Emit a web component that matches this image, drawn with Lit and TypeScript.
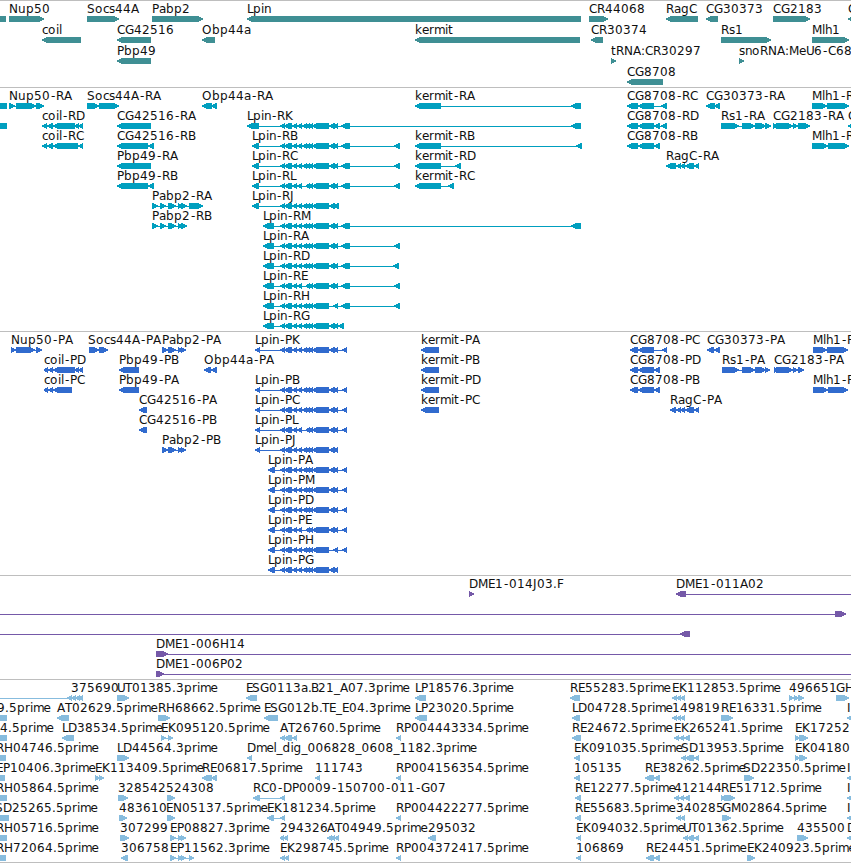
import { LitElement, html, svg, css } from 'lit';
import { customElement, property } from 'lit/decorators.js';

// row, label, strand, spans ("a-b,c-d"), optional label x
type Feature = [number, string, string, string, number?];

interface Track {
  name: string;
  height: number;
  pitch: number;
  features: Feature[];
}

const ADVANCES: Record<string, number> = {
  ' ': 4, '.': 4, ':': 4, '-': 6, '_': 6,
  A: 8, B: 7, C: 8, D: 9, E: 7, F: 7, G: 9, H: 9, I: 3, J: 4, K: 8, L: 6,
  M: 10, N: 9, O: 10, P: 7, R: 8, S: 8, T: 7, U: 8,
  a: 7, b: 8, c: 6, d: 8, e: 7, g: 8, h: 7, i: 3, k: 7, l: 3, m: 11, n: 7,
  o: 8, p: 8, r: 5, s: 6, t: 5, u: 8,
};

const KERNING: Record<string, number> = { ES: -1, '.B': -1, '.T': -1, me: -0.6 };

const BODY = '280-285,284-292,292-297,297-302,302-307,306-310,309-313,312-329,329-335,333-338';
const BODY_E = '280-285,284-292,292-297,297-302,306-310,309-313,312-329,329-335,333-338';
const BODY_H = '280-285,284-292,292-297,297-302,302-307,306-310,309-313,312-329,333-338';

const genes: Feature[] = [
  [0, '', '|', '-5-6'],
  [0, 'Nup50', '>', '9-44'],
  [0, 'Socs44A', '>', '87-119'],
  [0, 'Pabp2', '>', '152-203'],
  [0, 'Lpin', '<', '247-581'],
  [0, 'CR44068', '>', '589-608'],
  [0, 'RagC', '<', '666-698'],
  [0, 'CG30373', '<', '706-718'],
  [0, 'CG2183', '>', '773-810'],
  [0, 'C', '<', '848-870'],
  [1, 'coil', '<', '42-81'],
  [1, 'CG42516', '<', '117-151'],
  [1, 'Obp44a', '<', '202-215'],
  [1, 'kermit', '<', '415-580'],
  [1, 'CR30374', '<', '591-603'],
  [1, 'Rs1', '>', '721-771'],
  [1, 'Mlh1', '>', '812-849'],
  [2, 'Pbp49', '<', '117-151'],
  [2, 'tRNA:CR30297', '>', '611-616'],
  [2, 'snoRNA:MeU6-C68', '>', '739-744'],
  [3, 'CG8708', '<', '627-663'],
];

const transcripts: Feature[] = [
  [0, '', '|', '-5-7'],
  [0, 'Nup50-RA', '>', '9-15,16-36,36-44'],
  [0, 'Socs44A-RA', '>', '87-99,99-119'],
  [0, 'Obp44a-RA', '<', '202-212,211-217'],
  [0, 'kermit-RA', '<', '415-441,571-581'],
  [0, 'CG8708-RC', '<', '627-638,638-654,661-667'],
  [0, 'CG30373-RA', '<', '706-715,714-720'],
  [0, 'Mlh1-RA', '>', '812-827,827-849'],
  [1, '', '|', '-5-7'],
  [1, 'coil-RD', '<', '42-47,47-53,53-75,74-79,78-83'],
  [1, 'CG42516-RA', '<', '117-151'],
  [1, 'Lpin-RK', '<', `247-259,${BODY},341-350,571-581`],
  [1, 'CG8708-RD', '<', '627-638,638-654,654-660,661-667'],
  [1, 'Rs1-RA', '>', '721-739,742-755,755-766,765-771'],
  [1, 'CG2183-RA', '>', '773-777,776-793,793-798,798-810'],
  [1, 'C', '<', '848-870'],
  [2, 'coil-RC', '<', '42-47,47-53,53-78,78-83'],
  [2, 'CG42516-RB', '<', '117-148,148-154'],
  [2, 'Lpin-RB', '<', `252-259,${BODY},341-350,394-400`],
  [2, 'kermit-RB', '<', '415-441,576-582'],
  [2, 'CG8708-RB', '<', '627-638,638-654,654-660'],
  [2, 'Mlh1-RB', '>', '812-828,828-849'],
  [3, 'Pbp49-RA', '<', '117-151'],
  [3, 'Lpin-RC', '<', `252-259,${BODY},341-350,394-400`],
  [3, 'kermit-RD', '<', '415-441,455-461'],
  [3, 'RagC-RA', '<', '666-676,676-681,680-685,685-694,694-699'],
  [4, 'Pbp49-RB', '<', '117-148,148-154'],
  [4, 'Lpin-RL', '<', `252-259,${BODY_E},341-350,394-400`],
  [4, 'kermit-RC', '<', '415-441,448-454'],
  [5, 'Pabp2-RA', '>', '152-158,160-166,168-176,178-182,181-187,189-203'],
  [5, 'Lpin-RJ', '<', `252-259,${BODY},334-339`],
  [6, 'Pabp2-RB', '>', '152-158,160-166,168-176,178-182,181-187'],
  [6, 'Lpin-RM', '<', `263-274,${BODY},341-350,571-581`],
  [7, 'Lpin-RA', '<', `263-274,${BODY},341-350,394-400`],
  [8, 'Lpin-RD', '<', `263-274,${BODY},341-350,393-399`],
  [9, 'Lpin-RE', '<', `263-274,${BODY_E},341-350,394-400`],
  [10, 'Lpin-RH', '<', `263-274,${BODY_H},341-350,394-400`],
  [11, 'Lpin-RG', '<', `263-274,${BODY},338-344`],
];

const proteins: Feature[] = [
  [0, 'Nup50-PA', '>', '11-16,16-35,36-42'],
  [0, 'Socs44A-PA', '>', '89-99,99-108', 88],
  [0, 'Pabp2-PA', '>', '162-168,168-176,178-182,181-186'],
  [0, 'Lpin-PK', '<', `255-260,${BODY},342-347`],
  [0, 'kermit-PA', '<', '421-439'],
  [0, 'CG8708-PC', '<', '630-638,638-654,662-667'],
  [0, 'CG30373-PA', '<', '707-714,714-720'],
  [0, 'Mlh1-PA', '>', '813-827,827-848'],
  [1, 'coil-PD', '<', '44-48,48-53,53-75,74-79,78-83'],
  [1, 'Pbp49-PB', '<', '119-139'],
  [1, 'Obp44a-PA', '<', '204-211,211-217'],
  [1, 'kermit-PB', '<', '421-439'],
  [1, 'CG8708-PD', '<', '630-638,638-654,654-660'],
  [1, 'Rs1-PA', '>', '722-739,742-755,755-766,765-770'],
  [1, 'CG2183-PA', '>', '774-777,776-793,793-798,798-804'],
  [2, 'coil-PC', '<', '44-48,48-53,53-72'],
  [2, 'Pbp49-PA', '<', '119-139'],
  [2, 'Lpin-PB', '<', `255-260,${BODY},342-347`],
  [2, 'kermit-PD', '<', '421-439'],
  [2, 'CG8708-PB', '<', '630-638,638-654,654-660'],
  [2, 'Mlh1-PB', '>', '813-828,828-848'],
  [3, 'CG42516-PA', '<', '139-147'],
  [3, 'Lpin-PC', '<', `255-260,${BODY},342-347`],
  [3, 'kermit-PC', '<', '421-439'],
  [3, 'RagC-PA', '<', '670-676,676-681,680-685,685-694,694-699'],
  [4, 'CG42516-PB', '<', '139-147'],
  [4, 'Lpin-PL', '<', `255-260,${BODY_E},342-347`],
  [5, 'Pabp2-PB', '>', '162-168,168-176,178-182,181-186'],
  [5, 'Lpin-PJ', '<', `255-260,${BODY}`],
  [6, 'Lpin-PA', '<', `268-275,${BODY},342-347`],
  [7, 'Lpin-PM', '<', `268-275,${BODY},342-347`],
  [8, 'Lpin-PD', '<', `268-275,${BODY},342-347`],
  [9, 'Lpin-PE', '<', `268-275,${BODY_E},342-347`],
  [10, 'Lpin-PH', '<', `268-275,${BODY_H},342-347`],
  [11, 'Lpin-PG', '<', `268-275,${BODY}`],
];

const bacs: Feature[] = [
  [0, 'DME1-014J03.F', '>', '469-474'],
  [0, 'DME1-011A02', '<', '676-686,870-880'],
  [1, '', '>', '-20--10,835-846'],
  [2, '', '<', '-20--10,680-690'],
  [3, 'DME1-006H14', '>', '156-168,870-880'],
  [4, 'DME1-006P02', '>', '156-164,870-880'],
];

const ests: Feature[] = [
  [0, '', '<', '-20--10,67-72'],
  [0, '375690', '<', '71-76,75-80,79-83'],
  [0, 'UT01385.3prime', '>', '117-129'],
  [0, 'ESG0113a.B21_A07.3prime', '<', '246-257'],
  [0, 'LP18576.3prime', '<', '415-426'],
  [0, 'RE55283.5prime', '<', '570-580'],
  [0, 'EK112853.5prime', '<', '672-677,677-681,680-685'],
  [0, '496651', '>', '789-794,794-798,798-804'],
  [0, 'GH', '>', '836-849'],
  [1, '9.5prime', '<', '-9-7', -3],
  [1, 'AT02629.5prime', '<', '57-69'],
  [1, 'RH68662.5prime', '>', '158-170'],
  [1, 'ESG012b.TE_E04.3prime', '<', '264-278'],
  [1, 'LP23020.5prime', '<', '415-427'],
  [1, 'LD04728.5prime', '<', '572-580'],
  [1, '149819', '<', '672-677,677-681,680-685'],
  [1, 'RE16331.5prime', '>', '721-733'],
  [1, 'I', '<', '847-857'],
  [2, '4.5prime', '<', '-9-7', 0],
  [2, 'LD38534.5prime', '<', '62-74'],
  [2, 'EK095120.5prime', '>', '161-166,168-173'],
  [2, 'AT26760.5prime', '<', '280-285,284-292,292-297'],
  [2, 'RP004443334.5prime', '<', '396-401'],
  [2, 'RE24672.5prime', '<', '572-581'],
  [2, 'EK265241.5prime', '<', '674-679,679-684,684-690'],
  [2, 'EK17252', '>', '795-800,799-808'],
  [3, 'RH04746.5prime', '<', '-9-6', -4],
  [3, 'LD44564.3prime', '>', '117-129'],
  [3, 'Dmel_dig_006828_0608_1182.3prime', '<', '247-252'],
  [3, 'EK091035.5prime', '<', '574-580'],
  [3, 'SD13953.5prime', '<', '681-686,685-694,694-699'],
  [3, 'EK04180', '>', '795-800,799-807'],
  [4, 'EP10406.3prime', '<', '-9-5', -4],
  [4, 'EK113409.5prime', '>', '95-100,99-104'],
  [4, 'RE06817.5prime', '<', '202-212,211-217'],
  [4, '111743', '<', '315-320'],
  [4, 'RP004156354.5prime', '<', '396-401'],
  [4, '105135', '<', '574-580'],
  [4, 'RE38262.5prime', '<', '645-654,654-660'],
  [4, 'SD22350.5prime', '>', '744-754', 743],
  [4, 'I', '<', '847-857'],
  [5, 'RH05864.5prime', '<', '-9-7', -4],
  [5, '328542', '>', '118-128'],
  [5, '524308', '>', '167-175', 166],
  [5, 'RC0-DP0009-150700-011-G07', '<', '253-260,280-285'],
  [5, 'RE12277.5prime', '<', '575-581'],
  [5, '412144', '<', '674-679,679-684,684-690'],
  [5, 'RE51712.5prime', '>', '721-725,724-735'],
  [5, 'I', '<', '847-857'],
  [6, 'SD25265.5prime', '<', '-9-9', -5],
  [6, '483610', '>', '119-127'],
  [6, 'EN05137.5prime', '>', '167-175', 166],
  [6, 'EK181234.5prime', '<', '267-274,280-285'],
  [6, 'RP004422277.5prime', '<', '396-401'],
  [6, 'RE55683.5prime', '<', '575-581'],
  [6, '340285', '<', '676-681,680-685'],
  [6, 'GM02864.5prime', '>', '722-731'],
  [6, 'I', '<', '847-857'],
  [7, 'RH05716.5prime', '<', '-9-7', -4],
  [7, '307299', '>', '120-129'],
  [7, 'EP08827.3prime', '>', '170-176,178-182,181-186'],
  [7, '294326', '<', '280-284,284-288'],
  [7, 'AT04949.5prime', '<', '327-332,331-335,335-339'],
  [7, '295032', '<', '428-436'],
  [7, 'EK094032.5prime', '<', '576-581'],
  [7, 'UT01362.5prime', '<', '683-688,687-694,694-699'],
  [7, '435500', '>', '797-808'],
  [7, 'D', '<', '847-857'],
  [8, 'RH72064.5prime', '<', '-9-6', -4],
  [8, '306758', '<', '121-128'],
  [8, 'EP11562.3prime', '>', '170-176,178-182,181-186,189-194'],
  [8, 'EK298745.5prime', '<', '280-285,284-289'],
  [8, 'RP004372417.5prime', '<', '396-401'],
  [8, '106869', '<', '576-581'],
  [8, 'RE24451.5prime', '<', '646-654,654-660'],
  [8, 'EK240923.5prime', '>', '747-755'],
];

const tracks: Track[] = [
  { name: 'gene', height: 86, pitch: 21, features: genes },
  { name: 'transcript', height: 243, pitch: 20, features: transcripts },
  { name: 'protein', height: 243, pitch: 20, features: proteins },
  { name: 'bac', height: 103, pitch: 20, features: bacs },
  { name: 'est', height: 182, pitch: 20, features: ests },
];

@customElement('genome-track')
export class GenomeTrack extends LitElement {
  static styles = css`
    :host {
      display: block;
      border-top: 1px solid #bebebe;
    }
    svg {
      display: block;
      width: 100%;
      overflow: hidden;
    }
    text {
      font-family: "DejaVu Sans", "Liberation Sans", sans-serif;
      font-size: 12px;
      fill: #101010;
    }
    .glyph {
      shape-rendering: crispEdges;
    }
    .gene { fill: #3f8f94; }
    .transcript { fill: #009fbf; }
    .protein { fill: #316bce; }
    .bac { fill: #7559a8; }
    .est { fill: #87bcde; }
  `;

  @property({ attribute: false }) track!: Track;

  spans(text: string) {
    return [...text.matchAll(/(-?\d+)-(-?\d+)/g)].map((m) => [Number(m[1]), Number(m[2])]);
  }

  exon(a: number, b: number, y: number, strand: string) {
    if (strand === '|') {
      return svg`<rect x=${a} y=${y} width=${b - a} height="6"></rect>`;
    }
    // stepped tip: 2px, then 4px, then the full 6px
    const tip = strand === '>' ? b : a;
    const tail = strand === '>' ? a : b;
    const dir = strand === '>' ? -1 : 1;
    const mid = tip + dir * (b - a < 5 ? 1 : 2);
    const neck = tip + dir * Math.min(4, b - a - 1);
    const points = [
      [tip, y + 2], [mid, y + 2], [mid, y + 1], [neck, y + 1], [neck, y], [tail, y],
      [tail, y + 6], [neck, y + 6], [neck, y + 5], [mid, y + 5], [mid, y + 4], [tip, y + 4],
    ];
    return svg`<polygon points=${points.map((p) => p.join(',')).join(' ')}></polygon>`;
  }

  label(text: string, x: number, y: number) {
    let pos = x;
    const xs = [...text].map((ch, i) => {
      pos += (i > 0 && KERNING[text.slice(i - 1, i + 1)]) || 0;
      // the hyphen sits in the middle of its wide cell
      const at = ch === '-' ? pos + 1 : pos;
      pos += ADVANCES[ch] ?? 8;
      return at;
    });
    return svg`<text x=${xs.join(' ')} y=${y}>${text}</text>`;
  }

  feature([row, name, strand, ranges, labelX]: Feature) {
    const top = row * this.track.pitch;
    const exons = this.spans(ranges);
    const first = exons[0][0];
    const last = exons[exons.length - 1][1];
    return svg`
      <g class="glyph ${this.track.name}">
        ${exons.length > 1
          ? svg`<rect x=${first + 1} y=${top + 18} width=${last - first - 2} height="1"></rect>`
          : ''}
        ${exons.map(([a, b]) => this.exon(a, b, top + 15, strand))}
      </g>
      ${name ? this.label(name, labelX ?? first, top + 12) : ''}
    `;
  }

  render() {
    return html`
      <svg height=${this.track.height}>
        ${this.track.features.map((f) => this.feature(f))}
      </svg>
    `;
  }
}

@customElement('app-root')
export class AppRoot extends LitElement {
  static styles = css`
    :host {
      display: block;
      width: 851px;
      height: 863px;
      overflow: hidden;
      background: #fff;
    }
    .tracks {
      display: flex;
      flex-direction: column;
      border-bottom: 1px solid #bebebe;
    }
  `;

  render() {
    return html`
      <div class="tracks">
        ${tracks.map((t) => html`<genome-track .track=${t}></genome-track>`)}
      </div>
    `;
  }
}
